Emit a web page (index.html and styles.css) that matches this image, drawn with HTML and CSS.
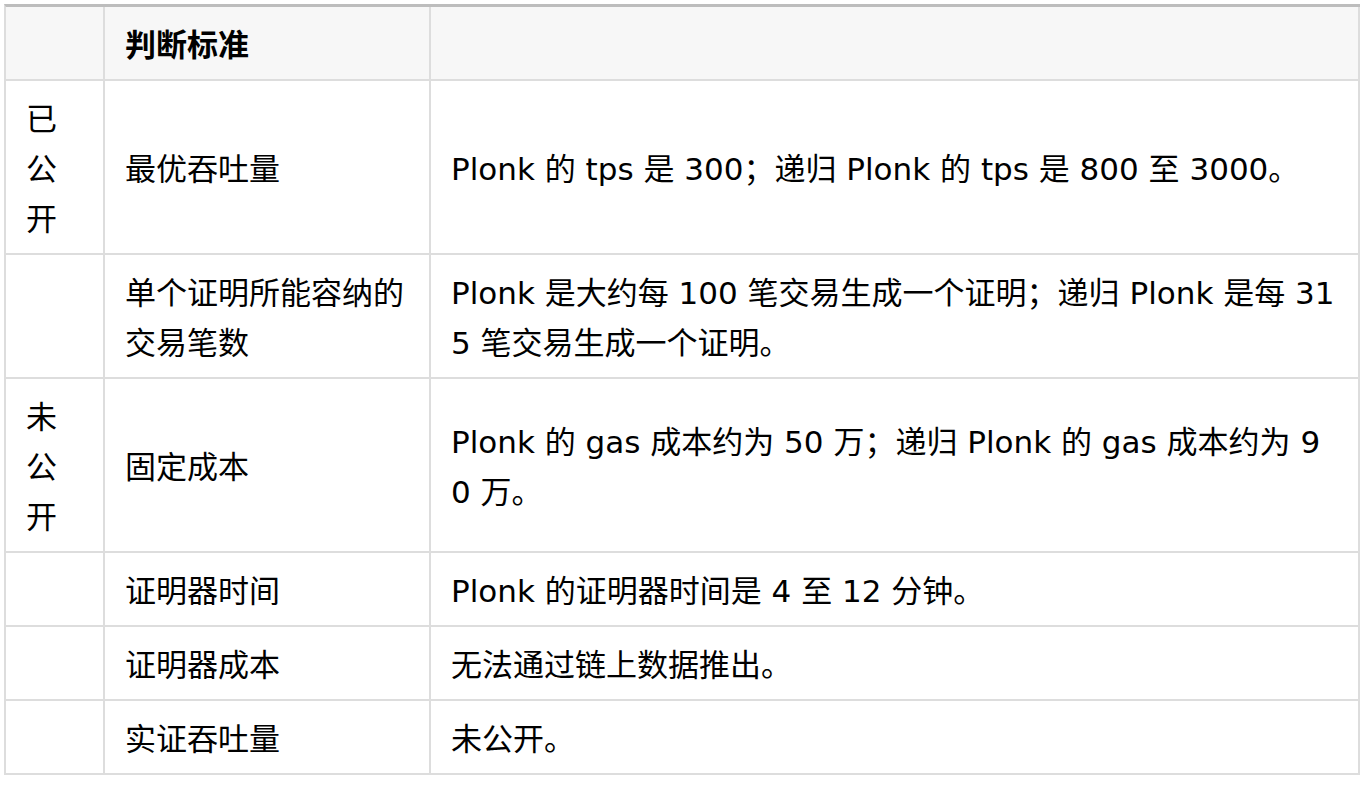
FILE: index.html
```html
<!DOCTYPE html>
<html lang="zh-CN">
<head>
<meta charset="utf-8">
<title>Plonk 判断标准</title>
<link rel="stylesheet" href="styles.css">
</head>
<body>
<table class="criteria">
  <thead>
    <tr>
      <th class="c1"></th>
      <th class="c2">判断标准</th>
      <th class="c3"></th>
    </tr>
  </thead>
  <tbody>
    <tr>
      <td>已公开</td>
      <td>最优吞吐量</td>
      <td>Plonk 的 tps 是 300；递归 Plonk 的 tps 是 800 至 3000。</td>
    </tr>
    <tr>
      <td></td>
      <td>单个证明所能容纳的交易笔数</td>
      <td>Plonk 是大约每 100 笔交易生成一个证明；递归 Plonk 是每 315 笔交易生成一个证明。</td>
    </tr>
    <tr>
      <td>未公开</td>
      <td>固定成本</td>
      <td>Plonk 的 gas 成本约为 50 万；递归 Plonk 的 gas 成本约为 90 万。</td>
    </tr>
    <tr>
      <td></td>
      <td>证明器时间</td>
      <td>Plonk 的证明器时间是 4 至 12 分钟。</td>
    </tr>
    <tr>
      <td></td>
      <td>证明器成本</td>
      <td>无法通过链上数据推出。</td>
    </tr>
    <tr>
      <td></td>
      <td>实证吞吐量</td>
      <td>未公开。</td>
    </tr>
  </tbody>
</table>
</body>
</html>
```

FILE: styles.css
```css
html, body {
  margin: 0;
  padding: 0;
  background: #ffffff;
}

body {
  padding: 4px;
  font-family: "DejaVu Sans", "Noto Sans CJK SC", sans-serif;
  font-size: 31px;
  line-height: 50px;
  color: #000000;
}

.criteria {
  width: 1354px;
  table-layout: fixed;
  border-collapse: separate;
  border-spacing: 0;
  border-top: 3px solid #bdbdbd;
  border-left: 2px solid #dddddd;
}

.criteria th,
.criteria td {
  box-sizing: border-box;
  padding: 13px 20px 9px;
  border-right: 2px solid #dddddd;
  border-bottom: 2px solid #dddddd;
  text-align: left;
  vertical-align: middle;
  word-break: break-all;
  font-weight: normal;
}

.criteria thead th {
  background: #f7f7f7;
  font-weight: bold;
  height: 74px;
}

.criteria .c1 { width: 99px; }
.criteria .c2 { width: 326px; }
.criteria .c3 { width: 929px; }
```
